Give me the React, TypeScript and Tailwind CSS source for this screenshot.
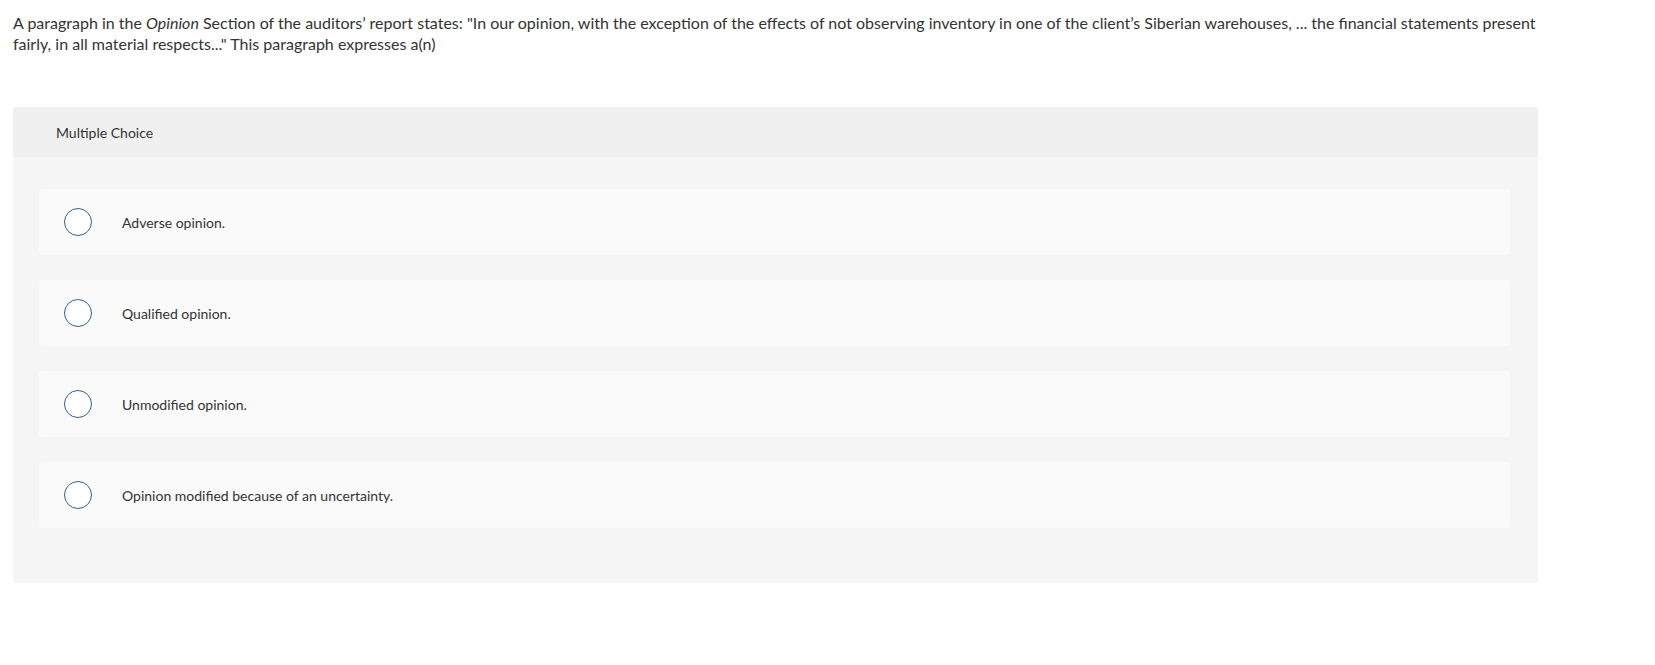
const options = [
  "Adverse opinion.",
  "Qualified opinion.",
  "Unmodified opinion.",
  "Opinion modified because of an uncertainty.",
];

export default function App() {
  return (
    <div
      className="min-h-screen bg-white text-[#333] pt-[12px] pl-[13px]"
      style={{ fontFamily: "Lato, 'Noto Sans', Arial, sans-serif" }}
    >
      <div className="w-[1525px]">
        <p className="text-[16px] leading-[21px]">
          A paragraph in the <em>Opinion</em> Section of the auditors’ report
          states: "In our opinion, with the exception of the effects of not
          observing inventory in one of the client’s Siberian warehouses, ...
          the financial statements present
          <br />
          fairly, in all material respects..." This paragraph expresses a(n)
        </p>

        <div className="mt-[53px] rounded-[3px] overflow-hidden">
          <div className="h-[50px] bg-[#f0f0f0] flex items-center pl-[43px] text-[14px]">
            Multiple Choice
          </div>
          <div className="bg-[#f5f5f5] pl-[26px] pr-[28px] pt-[32px] pb-[55px] flex flex-col gap-[25px]">
            {options.map((o) => (
              <div
                key={o}
                className="h-[66px] bg-[#fafafa] rounded-[4px] flex items-center pl-[25px]"
              >
                <span className="w-[28px] h-[28px] rounded-full border-[1.5px] border-[#2f5f94] bg-white shrink-0" />
                <span className="ml-[30px] text-[14px]">{o}</span>
              </div>
            ))}
          </div>
        </div>
      </div>
    </div>
  );
}
